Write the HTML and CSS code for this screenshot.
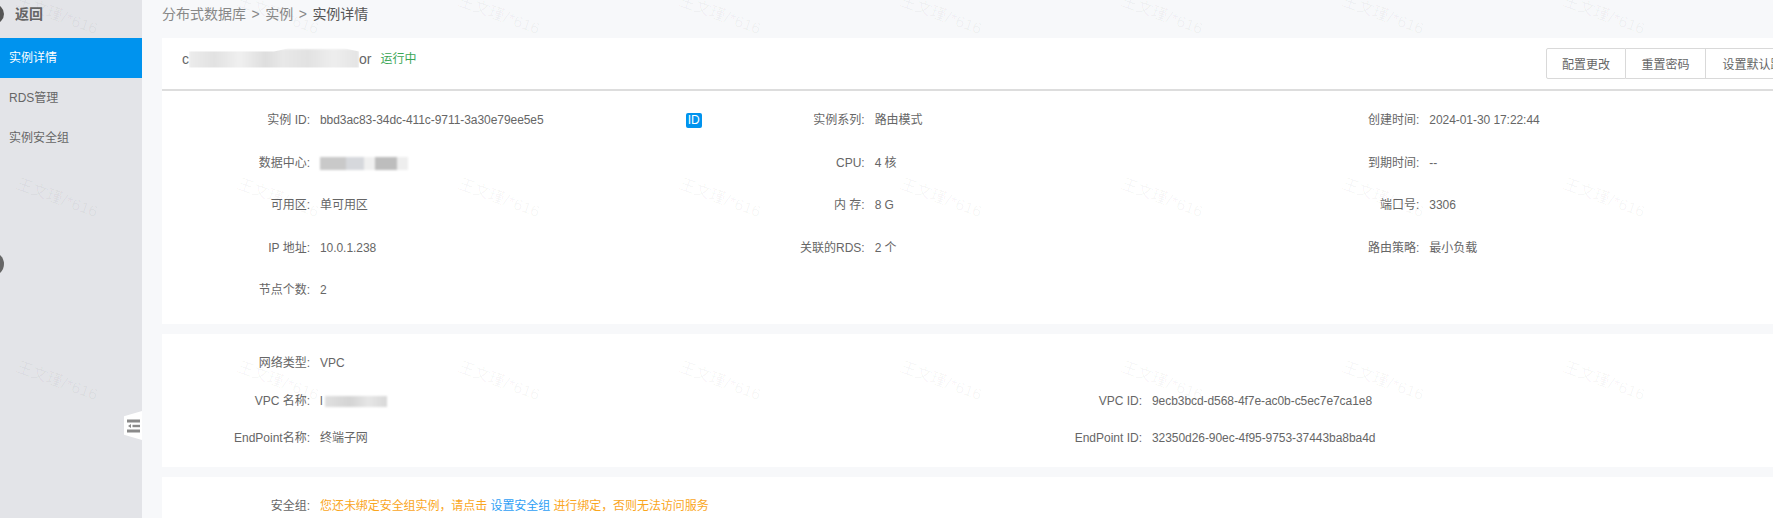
FILE: index.html
```html
<!DOCTYPE html>
<html lang="zh-CN">
<head>
    <meta charset="UTF-8">
    <title>实例详情</title>
    <link rel="stylesheet" href="styles.css">
</head>
<body>
    <div class="page">
        <aside class="sidebar">
            <div class="back">
                <span class="back-icon"></span>
                <span class="back-label">返回</span>
            </div>
            <a class="nav-item active">实例详情</a>
            <a class="nav-item">RDS管理</a>
            <a class="nav-item">实例安全组</a>
            <span class="side-dot"></span>
            <div class="toggle">
                <svg width="13" height="14" viewBox="0 0 13 14">
                    <rect x="0" y="0.5" width="13" height="3" fill="#8a8a8a"/>
                    <rect x="5.5" y="5.8" width="7.5" height="2.4" fill="#8a8a8a"/>
                    <path d="M1 7 L4 5 L4 9 Z" fill="#8a8a8a"/>
                    <rect x="0" y="10.5" width="13" height="3" fill="#8a8a8a"/>
                </svg>
            </div>
        </aside>

        <main class="main">
            <div class="breadcrumb">
                <span>分布式数据库</span>
                <span class="sep">&gt;</span>
                <span>实例</span>
                <span class="sep">&gt;</span>
                <span class="current">实例详情</span>
            </div>

            <section class="card">
                <div class="card-head">
                    <div class="name">
                        <span>c</span>
                        <span class="mask mask-name"></span>
                        <span>or</span>
                        <span class="status">运行中</span>
                    </div>
                    <div class="btn-group">
                        <button class="btn">配置更改</button>
                        <button class="btn">重置密码</button>
                        <button class="btn">设置默认路由</button>
                    </div>
                </div>
                <div class="info info-three">
                    <div class="row"><span class="label">实例 ID:</span><span class="value id-value">bbd3ac83-34dc-411c-9711-3a30e79ee5e5<span class="id-tag">ID</span></span></div>
                    <div class="row"><span class="label">实例系列:</span><span class="value">路由模式</span></div>
                    <div class="row"><span class="label">创建时间:</span><span class="value">2024-01-30 17:22:44</span></div>
                    <div class="row"><span class="label">数据中心:</span><span class="value"><span class="mask mask-zone"></span></span></div>
                    <div class="row"><span class="label">CPU:</span><span class="value">4 核</span></div>
                    <div class="row"><span class="label">到期时间:</span><span class="value">--</span></div>
                    <div class="row"><span class="label">可用区:</span><span class="value">单可用区</span></div>
                    <div class="row"><span class="label">内 存:</span><span class="value">8 G</span></div>
                    <div class="row"><span class="label">端口号:</span><span class="value">3306</span></div>
                    <div class="row"><span class="label">IP 地址:</span><span class="value">10.0.1.238</span></div>
                    <div class="row"><span class="label">关联的RDS:</span><span class="value">2 个</span></div>
                    <div class="row"><span class="label">路由策略:</span><span class="value">最小负载</span></div>
                    <div class="row"><span class="label">节点个数:</span><span class="value">2</span></div>
                </div>
            </section>

            <section class="card">
                <div class="info info-two">
                    <div class="row"><span class="label">网络类型:</span><span class="value">VPC</span></div>
                    <div class="row"></div>
                    <div class="row"><span class="label">VPC 名称:</span><span class="value">l<span class="mask mask-vpc"></span></span></div>
                    <div class="row"><span class="label">VPC ID:</span><span class="value">9ecb3bcd-d568-4f7e-ac0b-c5ec7e7ca1e8</span></div>
                    <div class="row"><span class="label">EndPoint名称:</span><span class="value">终端子网</span></div>
                    <div class="row"><span class="label">EndPoint ID:</span><span class="value">32350d26-90ec-4f95-9753-37443ba8ba4d</span></div>
                </div>
            </section>

            <section class="card">
                <div class="info info-last">
                    <div class="row"><span class="label">安全组:</span><span class="value warn">您还未绑定安全组实例，请点击 <a class="link">设置安全组</a> 进行绑定，否则无法访问服务</span></div>
                </div>
            </section>
        </main>
    </div>

    <div class="watermarks">
        <span>王文瑾/*616</span><span>王文瑾/*616</span><span>王文瑾/*616</span><span>王文瑾/*616</span><span>王文瑾/*616</span><span>王文瑾/*616</span><span>王文瑾/*616</span><span>王文瑾/*616</span>
        <span>王文瑾/*616</span><span>王文瑾/*616</span><span>王文瑾/*616</span><span>王文瑾/*616</span><span>王文瑾/*616</span><span>王文瑾/*616</span><span>王文瑾/*616</span><span>王文瑾/*616</span>
        <span>王文瑾/*616</span><span>王文瑾/*616</span><span>王文瑾/*616</span><span>王文瑾/*616</span><span>王文瑾/*616</span><span>王文瑾/*616</span><span>王文瑾/*616</span><span>王文瑾/*616</span>
    </div>
</body>
</html>
```

FILE: styles.css
```css
html, body {
    margin: 0;
    padding: 0;
    height: 100%;
    overflow: hidden;
}

body {
    position: relative;
    font-family: "Liberation Sans", "Noto Sans CJK SC", sans-serif;
    font-size: 12px;
    line-height: 16px;
    color: #666;
    background-color: #f7f8fa;
}

.page {
    display: flex;
    height: 518px;
}

/* sidebar */
.sidebar {
    position: relative;
    flex: 0 0 142px;
    overflow: hidden;
    background-color: #e3e4e8;
}

.back {
    display: flex;
    align-items: center;
    height: 38px;
    padding-bottom: 10px;
    box-sizing: border-box;
}

.back-icon {
    flex: none;
    width: 20px;
    height: 20px;
    margin-left: -16px;
    border-radius: 50%;
    background-color: #555;
}

.back-label {
    margin-left: 11px;
    font-size: 14px;
    font-weight: bold;
    color: #666;
}

.nav-item {
    display: block;
    height: 40px;
    line-height: 40px;
    padding-left: 9px;
    color: #666;
}

.nav-item.active {
    background-color: #0093ee;
    color: #fff;
}

.side-dot {
    position: absolute;
    left: -20px;
    top: 252px;
    width: 24px;
    height: 24px;
    border-radius: 50%;
    background-color: #666;
}

.toggle {
    position: absolute;
    right: 0;
    top: 411px;
    width: 18px;
    height: 29px;
    display: flex;
    align-items: center;
    justify-content: center;
    background-color: #fff;
    clip-path: polygon(0 18%, 100% 0, 100% 100%, 0 82%);
}

/* main */
.main {
    flex: 1;
    min-width: 0;
    padding-left: 20px;
    overflow: hidden;
}

.breadcrumb {
    display: flex;
    align-items: center;
    gap: 5.5px;
    height: 38px;
    padding-bottom: 10px;
    box-sizing: border-box;
    font-size: 14px;
    color: #888;
    white-space: nowrap;
}

.breadcrumb .current {
    color: #555;
}

.card {
    width: 1664px;
    margin-bottom: 10px;
    background-color: #fff;
}

.card-head {
    display: flex;
    justify-content: space-between;
    align-items: center;
    height: 53px;
    padding-left: 20px;
    box-sizing: border-box;
    border-bottom: 2px solid #ddd;
}

.name {
    display: flex;
    align-items: center;
    padding-bottom: 10px;
    font-size: 14px;
    color: #666;
}

.status {
    margin-left: 9px;
    font-size: 12px;
    color: #3aa655;
}

.btn-group {
    display: flex;
    margin-right: 14px;
}

.btn {
    width: 80px;
    height: 31px;
    padding: 0;
    border: 1px solid #d9d9d9;
    border-left-width: 0;
    background-color: #fff;
    font-family: inherit;
    font-size: 12px;
    color: #666;
}

.btn:first-child {
    border-left-width: 1px;
    border-radius: 2px 0 0 2px;
}

.btn:last-child {
    width: 106px;
}

.info {
    display: grid;
}

.info-three {
    grid-template-columns: repeat(3, 1fr);
    grid-auto-rows: 42.5px;
    padding-top: 8px;
    height: 233px;
    box-sizing: border-box;
}

.info-two {
    grid-template-columns: repeat(2, 1fr);
    grid-auto-rows: 37.7px;
    padding: 10px 0;
}

.info-last {
    padding: 8px 0;
}

.row {
    display: flex;
    align-items: center;
    white-space: nowrap;
}

.info-last .row {
    height: 42px;
}

.label {
    flex: 0 0 158px;
    padding-right: 10px;
    box-sizing: border-box;
    text-align: right;
}

.value {
    flex: 1;
    letter-spacing: -0.06px;
}

.id-value {
    display: flex;
    align-items: center;
}

.id-tag {
    margin-left: 142px;
    width: 16px;
    height: 15px;
    line-height: 15px;
    border-radius: 2px;
    text-align: center;
    background-color: #0093ee;
    color: #fff;
}

.warn {
    color: #faa61e;
}

.link {
    color: #2f9ff5;
}

/* blurred out text */
.mask {
    display: inline-block;
    vertical-align: middle;
    filter: blur(1px);
}

.mask-name {
    width: 170px;
    height: 20px;
    background: linear-gradient(90deg, #ececec, #e2e2e2 15%, #f0f0f0 30%, #dedede 45%, #e8e8e8 55%, #e2e2e2 70%, #eee 85%, #e4e4e4);
    clip-path: polygon(0 15%, 50% 15%, 58% 0, 92% 0, 100% 15%, 100% 95%, 0 95%);
}

.mask-zone {
    width: 88px;
    height: 13px;
    background: linear-gradient(90deg, #c9c9c9 0 30%, #d6d8dc 30% 50%, #f0f0f0 50% 62%, #bdbdbd 62% 88%, #eee 88%);
}

.mask-vpc {
    width: 62px;
    height: 11px;
    margin-left: 2px;
    background: linear-gradient(90deg, #e0e0e0, #d4d4d4 40%, #e6e6e6 70%, #d8d8d8);
}

/* watermark layer */
.watermarks {
    position: absolute;
    left: 20px;
    top: -8px;
    display: grid;
    grid-template-columns: repeat(8, 221px);
    grid-auto-rows: 183px;
    pointer-events: none;
}

.watermarks span {
    transform: rotate(20deg);
    transform-origin: 0 0;
    font-size: 16px;
    line-height: 18px;
    height: 18px;
    white-space: nowrap;
    color: rgba(0, 0, 0, 0.04);
}
```
